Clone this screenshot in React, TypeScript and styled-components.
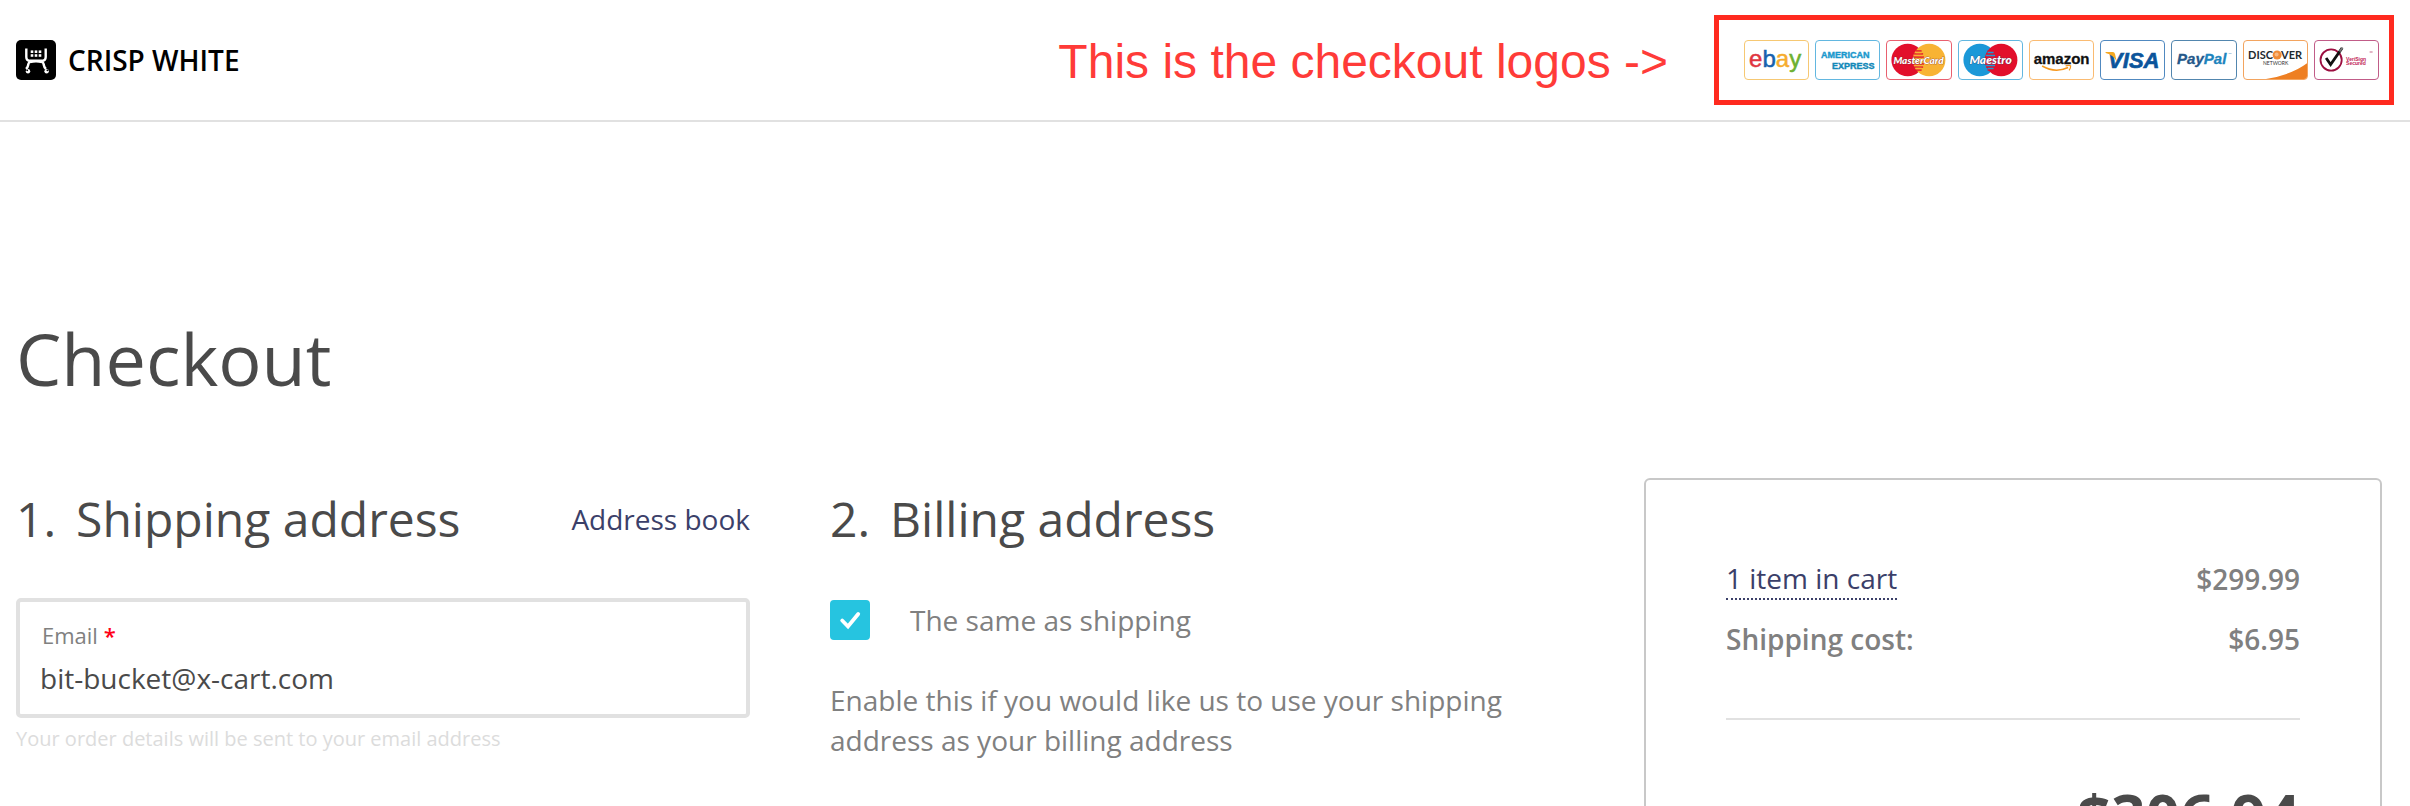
import React, { useState } from "react";
import styled, { createGlobalStyle } from "styled-components";

const colors = {
  ink: "#4a4a4a",
  muted: "#808080",
  faint: "#dcdcdc",
  line: "#e1e1e1",
  frame: "#c8c8c8",
  link: "#3b4069",
  accent: "#26c4e0",
  note: "#ff3b38",
  noteFrame: "#ff2a1f",
};

const GlobalStyle = createGlobalStyle`
  *, *::before, *::after { box-sizing: border-box; }
  body {
    margin: 0;
    background: #fff;
    color: ${colors.ink};
    font-family: "Open Sans", "Noto Sans", sans-serif;
    font-size: 28px;
    line-height: 40px;
  }
`;

const Page = styled.div`
  height: 100vh;
  overflow: hidden;
`;

const Header = styled.header`
  display: flex;
  align-items: center;
  justify-content: space-between;
  padding: 40px 31px 40px 16px;
  background: #fff;
  border-bottom: 2px solid ${colors.line};
`;

const Brand = styled.a`
  display: flex;
  align-items: center;
  gap: 12px;
  color: #000;
  font-weight: 600;
  line-height: 38px;
  text-decoration: none;
`;

const HeaderEnd = styled.div`
  display: flex;
  align-items: flex-start;
  gap: 76px;
  height: 40px;
`;

const Note = styled.p`
  margin: 0;
  color: ${colors.note};
  font-family: "Liberation Sans", Arial, sans-serif;
  font-size: 48px;
  line-height: 44px;
  white-space: nowrap;
`;

const Logos = styled.ul`
  position: relative;
  display: grid;
  grid-template-columns: repeat(9, 1fr);
  gap: 6px;
  width: 635px;
  margin: 0;
  padding: 0;
  list-style: none;

  &::after {
    content: "";
    position: absolute;
    inset: -25px -15px -25px -30px;
    border: 5px solid ${colors.noteFrame};
    pointer-events: none;
  }
`;

const LogoTile = styled.li<{ $edge: string }>`
  display: flex;
  height: 40px;
  border: 1px solid ${(p) => p.$edge};
  border-radius: 4px;
  background: #fff;
  overflow: hidden;

  svg {
    flex: 1;
    min-width: 0;
    height: 38px;
  }
`;

const Main = styled.main`
  padding: 196px 28px 0 16px;
`;

const Title = styled.h1`
  margin: 0;
  font-size: 72px;
  font-weight: 400;
  line-height: 80px;
`;

const Columns = styled.div`
  display: grid;
  grid-template-columns: 185fr 185fr 186fr;
  gap: 80px;
  margin-top: 80px;
`;

const Section = styled.section`
  padding-top: 8px;
`;

const SectionHead = styled.div`
  display: flex;
  align-items: center;
  justify-content: space-between;
  margin-bottom: 46px;
`;

const SectionTitle = styled.h2`
  display: flex;
  gap: 20px;
  margin: 0;
  font-size: 48px;
  font-weight: 400;
  line-height: 66px;
`;

const TextLink = styled.a`
  color: ${colors.link};
  text-decoration: none;
`;

const Field = styled.div`
  display: flex;
  flex-direction: column;
  height: 120px;
  padding: 18px 20px;
  border: 4px solid ${colors.line};
  border-radius: 5px;
  background: #fff;
`;

const FieldLabel = styled.label`
  padding-left: 2px;
  color: ${colors.muted};
  font-size: 22px;
  line-height: 30px;
`;

const Required = styled.span`
  color: #ff0018;
  font-weight: 600;
`;

const FieldInput = styled.input`
  width: 100%;
  height: 40px;
  margin: 8px 0 0;
  padding: 0;
  border: 0;
  outline: 0;
  background: transparent;
  color: ${colors.ink};
  font: inherit;
`;

const Hint = styled.p`
  margin: 6px 0 0;
  color: ${colors.faint};
  font-size: 20px;
  line-height: 30px;
`;

const CheckRow = styled.label`
  display: flex;
  align-items: center;
  gap: 40px;
  margin-top: 48px;
  color: ${colors.muted};
`;

const CheckBox = styled.span`
  position: relative;
  display: flex;
  width: 40px;
  height: 40px;

  svg {
    position: absolute;
    inset: 0;
    pointer-events: none;
  }
`;

const CheckInput = styled.input`
  flex: 1;
  margin: 0;
  appearance: none;
  border: 2px solid ${colors.line};
  border-radius: 4px;
  background: #fff;

  &:checked {
    border-color: ${colors.accent};
    background: ${colors.accent};
  }
`;

const Help = styled.p`
  margin: 40px 0 0;
  color: ${colors.muted};
`;

const Summary = styled.aside`
  padding: 79px 80px 80px;
  border: 2px solid ${colors.frame};
  border-radius: 6px;
`;

const SummaryRow = styled.div`
  display: flex;
  align-items: flex-start;
  justify-content: space-between;
  height: 60px;
  color: ${colors.muted};
  font-weight: 600;
`;

const CartLink = styled(TextLink)`
  border-bottom: 2px dotted ${colors.link};
  font-weight: 400;
  line-height: 39px;
`;

const Total = styled.div`
  margin-top: 39px;
  padding-top: 56px;
  border-top: 2px solid ${colors.line};
  font-size: 60px;
  font-weight: 700;
  line-height: 80px;
  text-align: right;
`;

const SANS = "'Liberation Sans', Arial, sans-serif";
const LATO = "Lato, sans-serif";

function CartMark() {
  return (
    <svg width="40" height="40" viewBox="0 0 40 40" aria-hidden="true">
      <rect width="40" height="40" rx="5" />
      <g fill="none" stroke="#fff" strokeWidth="2.4">
        <path d="M10.300 8.500v8.500q0 3.800 4 3.800h11.400q4 0 4-3.800V8.500" />
        <path d="M15 21q-2.500 1-2.800 4-.4 2.600-2.200 4" />
        <path d="M25 21q2.500 1 2.800 4 .4 2.600 2.200 4" />
        <path d="M14 22.300q6-1.500 12 0" strokeWidth="1.800" />
      </g>
      <g fill="#fff">
        <circle cx="12" cy="31.300" r="2.200" />
        <circle cx="30.600" cy="31.300" r="2.200" />
        {[11.6, 15.4].map((y) =>
          [16, 20, 24].map((x) => (
            <rect key={`${x}-${y}`} x={x - 1.3} y={y - 1.2} width="2.600" height="2.600" />
          ))
        )}
      </g>
      <circle cx="11.200" cy="30.300" r="0.900" />
      <circle cx="31.400" cy="30.300" r="0.900" />
    </svg>
  );
}

function Globes({ left, right }: { left: string; right: string }) {
  return (
    <>
      <circle cx="20.600" cy="19" r="16.300" fill={left} />
      <circle cx="42" cy="19" r="16.300" fill={right} />
      <path
        d="M28.500 10h6M27 13h9M26.200 16h10.500M26.200 23h10.500M27 26h9M28.500 29h6"
        stroke="#e20f2b"
        strokeWidth="1.500"
      />
      <path
        d="M28.500 11.500h6M27 14.500h9M27 24.500h9M28.500 27.500h6"
        stroke={left === "#e20f2b" ? right : left}
        strokeWidth="1.500"
      />
    </>
  );
}

const logos = [
  {
    name: "eBay",
    edge: "#f6c873",
    art: (
      <text x="4" y="26" fontFamily={SANS} fontSize="24">
        <tspan fill="#e0353f" stroke="#e0353f" strokeWidth="0.500">e</tspan>
        <tspan fill="#1762ae" stroke="#1762ae" strokeWidth="0.500">b</tspan>
        <tspan fill="#f6ac2d" stroke="#f6ac2d" strokeWidth="0.500">a</tspan>
        <tspan fill="#6db130" stroke="#6db130" strokeWidth="0.500">y</tspan>
      </text>
    ),
  },
  {
    name: "American Express",
    edge: "#62b7e0",
    art: (
      <g fontFamily={SANS} fontWeight="700" fontSize="9" strokeWidth="0.400">
        <text x="5" y="16.500" fill="#1a98cd" stroke="#1a98cd">AMERICAN</text>
        <text x="16" y="27.500" fill="#1288b8" stroke="#1288b8">EXPRESS</text>
      </g>
    ),
  },
  {
    name: "MasterCard",
    edge: "#e9606f",
    art: (
      <>
        <Globes left="#e20f2b" right="#f8b334" />
        <text x="31.500" y="23" textAnchor="middle" fontFamily={LATO} fontWeight="900" fontStyle="italic" fontSize="10" fill="#fff" stroke="#7d2b2b" strokeWidth="0.600" paintOrder="stroke">MasterCard</text>
      </>
    ),
  },
  {
    name: "Maestro",
    edge: "#62b7e0",
    art: (
      <>
        <Globes left="#1b98d8" right="#e20f2b" />
        <text x="31.500" y="23" textAnchor="middle" fontFamily={LATO} fontWeight="900" fontStyle="italic" fontSize="12" fill="#fff" stroke="#3a3f70" strokeWidth="0.600" paintOrder="stroke">Maestro</text>
      </>
    ),
  },
  {
    name: "Amazon",
    edge: "#fabb72",
    art: (
      <>
        <text x="31.500" y="23" textAnchor="middle" fontFamily={SANS} fontWeight="700" fontSize="15" fill="#111" stroke="#111" strokeWidth="0.300">amazon</text>
        <path d="M12 25q13 7.500 26 1.500" fill="none" stroke="#f7981d" strokeWidth="1.500" />
        <path d="M35.500 24.800q3.500-1 5 0q.3 2-1.500 4.500" fill="none" stroke="#f7981d" strokeWidth="1.200" />
      </>
    ),
  },
  {
    name: "Visa",
    edge: "#5089c0",
    art: (
      <>
        <text x="7" y="27" fontFamily={SANS} fontWeight="700" fontStyle="italic" fontSize="22" fill="#0b549b" stroke="#0b549b" strokeWidth="0.600">VISA</text>
        <path d="M4.500 11h7q2 0 2.400 2l1.800 8q-3-7-11.200-9z" fill="#f6a821" />
      </>
    ),
  },
  {
    name: "PayPal",
    edge: "#5286ae",
    art: (
      <>
        <text x="5" y="23" fontFamily={SANS} fontWeight="700" fontStyle="italic" fontSize="15" strokeWidth="0.300">
          <tspan fill="#25588a" stroke="#25588a">Pay</tspan>
          <tspan fill="#1d84bd" stroke="#1d84bd">Pal</tspan>
        </text>
        <path d="M56.500 12.500h3" stroke="#9cc3dc" strokeWidth="0.800" />
      </>
    ),
  },
  {
    name: "Discover Network",
    edge: "#f3a45f",
    art: (
      <>
        <path d="M15 39Q47 35 64 21.500V39z" fill="#ee7f22" />
        <text x="4" y="18" fontFamily={LATO} fontWeight="700" fontSize="11" fill="#1f2a2e">DISC</text>
        <circle cx="33" cy="14" r="4.500" fill="#f18b36" />
        <circle cx="32.500" cy="13.500" r="2" fill="#f8b781" />
        <text x="37" y="18" fontFamily={LATO} fontWeight="700" fontSize="11" fill="#1f2a2e">VER</text>
        <text x="31.500" y="24" textAnchor="middle" fontFamily={LATO} fontSize="5" fill="#333">NETWORK</text>
      </>
    ),
  },
  {
    name: "VeriSign Secured",
    edge: "#c15c88",
    art: (
      <>
        <circle cx="16" cy="19" r="10.600" fill="none" stroke="#9b0f40" strokeWidth="1.800" />
        <path d="M11 17l4.500 6.500L27 7" fill="none" stroke="#111" strokeWidth="2.800" />
        <path d="M24.500 10.500L27.500 6.500" stroke="#777" strokeWidth="2" />
        <g fontFamily={SANS} fontWeight="700" fontSize="5" fill="#c01a54">
          <text x="31" y="19.500">VeriSign</text>
          <text x="31" y="23.500">Secured</text>
        </g>
        <path d="M54.500 11h3" stroke="#c56b8c" strokeWidth="1" />
      </>
    ),
  },
];

export default function App() {
  const [email, setEmail] = useState("bit-bucket@x-cart.com");
  const [same, setSame] = useState(true);

  return (
    <Page>
      <GlobalStyle />
      <Header>
        <Brand href="#">
          <CartMark />
          CRISP WHITE
        </Brand>
        <HeaderEnd>
          <Note>This is the checkout logos -&gt;</Note>
          <Logos>
            {logos.map((logo) => (
              <LogoTile key={logo.name} $edge={logo.edge}>
                <svg viewBox="0 0 63 38" role="img" aria-label={logo.name}>{logo.art}</svg>
              </LogoTile>
            ))}
          </Logos>
        </HeaderEnd>
      </Header>
      <Main>
        <Title>Checkout</Title>
        <Columns>
          <Section>
            <SectionHead>
              <SectionTitle><span>1.</span>Shipping address</SectionTitle>
              <TextLink href="#">Address book</TextLink>
            </SectionHead>
            <Field>
              <FieldLabel htmlFor="email">Email <Required>*</Required></FieldLabel>
              <FieldInput id="email" type="email" value={email} onChange={(e) => setEmail(e.target.value)} />
            </Field>
            <Hint>Your order details will be sent to your email address</Hint>
          </Section>
          <Section>
            <SectionHead>
              <SectionTitle><span>2.</span>Billing address</SectionTitle>
            </SectionHead>
            <CheckRow>
              <CheckBox>
                <CheckInput type="checkbox" checked={same} onChange={(e) => setSame(e.target.checked)} />
                {same && (
                  <svg width="40" height="40" viewBox="0 0 40 40" fill="none" stroke="#fff" strokeWidth="3.800" strokeLinecap="round" aria-hidden="true">
                    <path d="M12.200 20.500l5.800 6L28.200 14" />
                  </svg>
                )}
              </CheckBox>
              The same as shipping
            </CheckRow>
            <Help>Enable this if you would like us to use your shipping address as your billing address</Help>
          </Section>
          <Summary>
            <SummaryRow>
              <CartLink href="#">1 item in cart</CartLink>
              <span>$299.99</span>
            </SummaryRow>
            <SummaryRow>
              <span>Shipping cost:</span>
              <span>$6.95</span>
            </SummaryRow>
            <Total>$306.94</Total>
          </Summary>
        </Columns>
      </Main>
    </Page>
  );
}
